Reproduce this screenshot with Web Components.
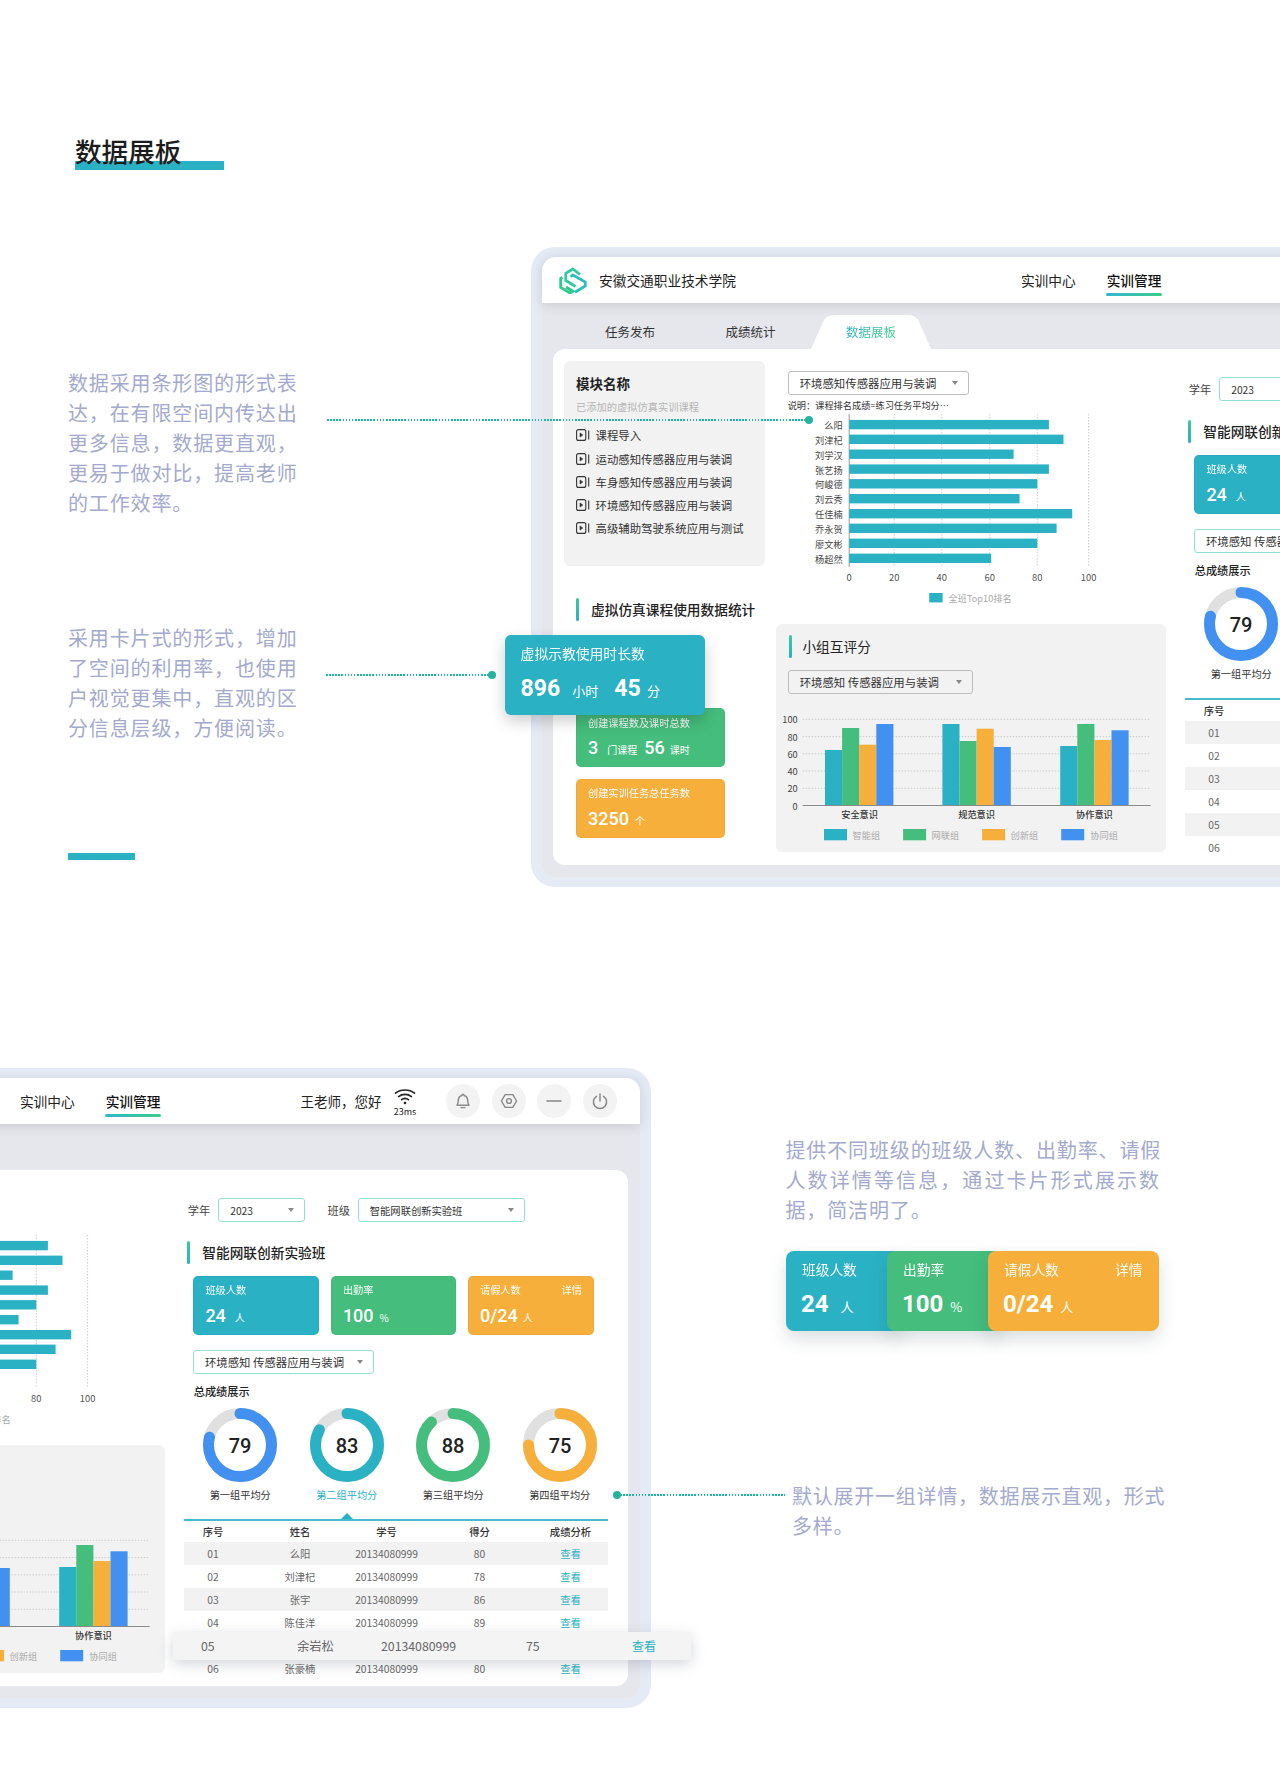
<!DOCTYPE html>
<html lang="zh-CN">
<head>
<meta charset="utf-8">
<title>数据展板</title>
<style>
html,body{margin:0;padding:0;background:#fff;overflow:hidden}
body{font-family:"Noto Sans CJK SC","Noto Sans",sans-serif;width:1280px;height:1787px}
</style>
</head>
<body>
<x-sheet></x-sheet>
<script>
const TEAL='#2bb1c4',GREEN='#45bd7c',ORANGE='#f6af3a',BLUE='#4291f1';
const CJK='"Noto Sans CJK SC","Noto Sans",sans-serif';
function def(name,css,html){
  customElements.define(name,class extends HTMLElement{
    constructor(){
      super();
      const r=this.attachShadow({mode:'open'});
      r.innerHTML='<style>'+css+'</style>'+(typeof html==='function'?html(this):html);
    }
  });
}
/* ---------- small pieces ---------- */
def('x-select',`
:host{display:block;box-sizing:border-box;height:24px;border:1px solid #bdbdbd;border-radius:3px;font-size:11.4px;color:#333}
:host([mint]){border:1.2px solid #8fe0d4;border-radius:3px;font-size:10.3px}
:host([big]){font-size:11.4px;color:#333}
.w{display:flex;align-items:center;justify-content:space-between;height:100%;padding:0 10px 0 11px;white-space:pre}
.c{width:0;height:0;border:3.2px solid transparent;border-top:4px solid #888;border-bottom:0}
`,`<div class="w"><span><slot></slot></span><i class="c"></i></div>`);

def('x-title',`
:host{display:flex;align-items:center;gap:12px;height:22.6px;font-size:13.7px;font-weight:500;color:#222;white-space:nowrap}
i{width:3px;height:100%;border-radius:2px;background:linear-gradient(#3cc99a,${TEAL});flex:none}
`,`<i></i><span><slot></slot></span>`);

def('x-stat',`
:host{display:block;box-sizing:border-box;position:relative;background:var(--bg);color:#fff;border-radius:var(--r,5px);
 padding:var(--top,6.7px) var(--pr,12px) 0 var(--pl,12px);width:var(--w);height:var(--h);flex:none;
 box-shadow:var(--sh,inset 0 0 0 1px rgba(0,0,0,.03));overflow:visible}
.l{display:flex;justify-content:space-between;font-size:var(--lab,10.2px);line-height:var(--labh,14px);white-space:nowrap;opacity:.97}
.n{display:flex;align-items:baseline;margin-top:var(--gap,8px);line-height:var(--numh,20px);white-space:nowrap;height:var(--numh,20px)}
::slotted(b){font:var(--nw,500) var(--num,18px)/var(--numh,20px) Roboto,sans-serif}
::slotted(i){font:400 var(--unit,10px)/var(--numh,20px) ${CJK};margin-left:var(--ug,9px)}
`,`<div class="l"><span><slot name="label"></slot></span><span><slot name="extra"></slot></span></div><div class="n"><slot></slot></div>`);

def('x-donut',`
:host{display:block;width:106.5px;flex:none;text-align:center}
svg{display:block;margin:0 auto}
text{font:500 20px Roboto,sans-serif;fill:#222;text-anchor:middle;dominant-baseline:central}
p{margin:6px 0 0;font-size:10.2px;line-height:14px;color:#333;white-space:nowrap}
:host([active]) p{color:${TEAL}}
`,el=>{
  const s=el.getAttribute('score'),c=el.getAttribute('color');
  return `<svg width="74" height="74" viewBox="0 0 74 74"><circle cx="37" cy="37" r="31.5" fill="none" stroke="#e0e0e0" stroke-width="11"/>
  <circle cx="37" cy="37" r="31.5" fill="none" stroke="${c}" stroke-width="11" stroke-linecap="round" pathLength="100" stroke-dasharray="${s} 100" transform="rotate(-90 37 37)"/>
  <text x="37" y="37.8">${s}</text></svg><p><slot></slot></p>`;
});

/* ---------- icons ---------- */
const ICON={
 logo:`<svg width="28" height="28" viewBox="0 0 28 28" fill="none" stroke-width="2.8" stroke-linejoin="miter">
 <path stroke="#30cba0" d="M21 8.5 13.8 3 6.8 7.2v7.3l9.7 6"/><path stroke="#31cb8c" d="M3.5 11.5 1.7 12.6v8.9L11 27l3-1.8-7-4.2"/><path stroke="#2bbdc2" d="M11.5 10.5 14 9l12.3 7v4L16 26.3"/></svg>`,
 bell:`<svg width="18" height="18" viewBox="0 0 18 18" fill="none" stroke="#888" stroke-width="1.4" stroke-linecap="round" stroke-linejoin="round"><path d="M9 2.2a1 1 0 0 1 1 1v.3c2.3.6 3.7 2.5 3.7 4.9 0 2.4.5 3.6 1.3 4.8H3c.8-1.2 1.3-2.4 1.3-4.8 0-2.4 1.4-4.3 3.7-4.9v-.3a1 1 0 0 1 1-1z"/><path d="M7 15.6h4"/></svg>`,
 hex:`<svg width="18" height="18" viewBox="0 0 18 18" fill="none" stroke="#888" stroke-width="1.4" stroke-linejoin="round"><path d="M5.2 2.6h7.6L16.6 9l-3.8 6.4H5.2L1.4 9z"/><circle cx="9" cy="9" r="2.4"/></svg>`,
 minus:`<svg width="18" height="18" viewBox="0 0 18 18" fill="none" stroke="#888" stroke-width="1.5" stroke-linecap="round"><path d="M2 9h14"/></svg>`,
 power:`<svg width="18" height="18" viewBox="0 0 18 18" fill="none" stroke="#888" stroke-width="1.5" stroke-linecap="round"><path d="M9 2v7"/><path d="M5.4 4.4a6.6 6.6 0 1 0 7.2 0"/></svg>`,
 wifi:`<svg width="22" height="17" viewBox="0 0 22 17" fill="none" stroke="#222" stroke-width="1.6" stroke-linecap="round"><path d="M1.5 5.2C6.6.9 15.4.9 20.5 5.2"/><path d="M4.6 8.6c3.6-3 9.2-3 12.8 0"/><path d="M7.6 11.7c2-1.6 4.8-1.6 6.8 0"/><circle cx="11" cy="15" r="1.3" fill="#222" stroke="none"/></svg>`,
 play:`<svg width="14" height="12" viewBox="0 0 14 12" fill="none" stroke="#333" stroke-width="1.1"><rect x=".6" y=".6" width="9.2" height="10.8" rx="2"/><path d="M4 3.9v4.2l2.8-2.1z" fill="#333" stroke-width=".6" stroke-linejoin="round"/><path d="M12.7 1.6v8.8"/></svg>`
};

/* ---------- header ---------- */
def('x-topbar',`
:host{display:flex;align-items:center;height:46px;background:#fff;border-radius:14px 14px 0 0;padding-left:17.5px;position:relative;z-index:1;box-shadow:0 2px 12px rgba(50,50,70,.16);color:#222;white-space:nowrap}
.logo{width:28px;height:28px;flex:none}
.name{margin-left:12px;font-size:13.7px;line-height:20px}
.nav{margin-left:285px;font-size:13.7px;position:relative;line-height:20px}
.nav+.nav{margin-left:31px}
.on{font-weight:500;color:#111}
.on::after{content:"";position:absolute;left:-1px;right:-1px;top:23.3px;height:3px;border-radius:2px;background:linear-gradient(90deg,#33b7cf,#3dcb8a)}
.who{margin-left:140px;font-size:13.5px}
.net{margin-left:12px;width:23px;display:flex;flex-direction:column;align-items:center;margin-top:4px}
.net span{font-size:9px;line-height:11px;margin-top:1px}
.btn{width:34px;height:34px;border-radius:50%;background:#f3f3f3;display:flex;align-items:center;justify-content:center;margin-left:11.5px;flex:none}
.btn.a{margin-left:29.8px}
svg{display:block}
`,`<div class="logo">${ICON.logo}</div><div class="name">安徽交通职业技术学院</div>
<div class="nav">实训中心</div><div class="nav on">实训管理</div><div class="who">王老师，您好</div>
<div class="net">${ICON.wifi}<span>23ms</span></div>
<div class="btn a">${ICON.bell}</div><div class="btn">${ICON.hex}</div><div class="btn">${ICON.minus}</div><div class="btn">${ICON.power}</div>`);

def('x-tabs',`
:host{display:flex;align-items:center;height:46.3px;padding-left:63.5px;font-size:12.5px;color:#333;white-space:nowrap;box-sizing:border-box;padding-top:13px}
span{margin-right:70.5px;position:relative;line-height:20px}
.on{position:relative;color:transparent}
.on em{font-style:normal;position:relative;background:linear-gradient(90deg,${TEAL},#41c98a);-webkit-background-clip:text;background-clip:text;color:transparent}
svg{position:absolute;left:-34.7px;top:-7.3px;display:block}
`,`<span>任务发布</span><span>成绩统计</span><span class="on"><svg width="120" height="34" viewBox="0 0 120 34"><path fill="#fff" d="M0 34L11 9C13 3 17 0 24 0H96C103 0 107 3 109 9L120 34Z"/></svg><em>数据展板</em></span>`);

/* ---------- left column ---------- */
def('x-modules',`
:host{display:block;box-sizing:border-box;height:205px;background:#f2f2f2;border-radius:6px;padding:13.3px 12px 0;white-space:nowrap}
h3{margin:0;font-size:13.5px;font-weight:700;line-height:18px;color:#222}
p{margin:7.7px 0 9.5px;font-size:10.25px;line-height:14px;color:#b4b4b4}
div{display:flex;align-items:center;gap:5.5px;height:23px;font-size:11.4px;color:#333}
div:nth-of-type(2){margin-top:1px}
svg{display:block;flex:none}
`,`<h3>模块名称</h3><p>已添加的虚拟仿真实训课程</p>`+
['课程导入','运动感知传感器应用与装调','车身感知传感器应用与装调','环境感知传感器应用与装调','高级辅助驾驶系统应用与测试'].map(t=>`<div>${ICON.play}<span>${t}</span></div>`).join(''));

def('x-usage',`
:host{display:block;position:relative;padding-left:12px;padding-top:32.3px}
.blue{position:absolute;left:-59px;top:69.3px;z-index:3}
.g{margin-top:87.4px}
.o{margin-top:12.3px}
`,`<x-title>虚拟仿真课程使用数据统计</x-title>
<x-stat class="blue" style="--bg:${TEAL};--w:199.5px;--h:79.7px;--pl:15.6px;--top:9px;--lab:13.8px;--labh:18px;--gap:13px;--numh:28px;--num:23px;--nw:700;--unit:13px;--ug:12px;--r:6px;--sh:0 6px 16px rgba(0,0,0,.2)"><span slot="label">虚拟示教使用时长数</span><b>896</b><i>小时</i><b style="margin-left:16px">45</b><i style="margin-left:6.5px">分</i></x-stat>
<x-stat class="g" style="--bg:${GREEN};--w:149px;--h:59px;--top:7.7px"><span slot="label">创建课程数及课时总数</span><b>3</b><i>门课程</i><b style="margin-left:7px">56</b><i style="margin-left:5px">课时</i></x-stat>
<x-stat class="o" style="--bg:${ORANGE};--w:149px;--h:58.7px;--top:6.7px;--gap:9px"><span slot="label">创建实训任务总任务数</span><b>3250</b><i style="margin-left:6px">个</i></x-stat>`);

/* ---------- bar chart ---------- */
def('x-barchart',`
:host{display:block;width:390px;height:198px}
svg{display:block;overflow:visible}
text{font-family:${CJK};font-size:9.2px;fill:#444;dominant-baseline:central}
.a{font-size:9.4px;fill:#555;text-anchor:middle}
.n{text-anchor:end}
.l{fill:#aaa;font-size:9.2px}
`,()=>{
  const ox=776.4,oy=413,X=x=>(x-ox).toFixed(1),Y=y=>(y-oy).toFixed(1);
  const names=['么阳','刘津杞','刘学汉','张艺扬','何峻德','刘云秀','任佳楠','乔永贺','廖文彬','杨超然'];
  const ends=[1049.3,1063.9,1014,1049.3,1037.7,1020,1072.6,1057,1037.7,991.6];
  const cy=[425.6,440.3,455.2,470.1,484.8,499.7,514.7,529.3,544.3,559.3];
  const ticks=[[0,849.6],[20,894.7],[40,942.2],[60,990.2],[80,1037.7],[100,1089]];
  let s='<svg width="390" height="198" viewBox="0 0 390 198">';
  ticks.forEach(([t,x],i)=>{
    s+=`<line x1="${X(x)}" x2="${X(x)}" y1="${Y(415)}" y2="${Y(568)}" stroke="${i?'#cfcfcf':'#999'}" ${i?'stroke-dasharray="1.5 1.5"':''}/>`;
    s+=`<text class="a" x="${X(x)}" y="${Y(578.3)}">${t}</text>`;
  });
  names.forEach((n,i)=>{
    s+=`<rect x="${X(849.6)}" y="${Y(cy[i]-4.7)}" width="${(ends[i]-849.6).toFixed(1)}" height="9.4" fill="${TEAL}"/>`;
    s+=`<text class="n" x="${X(843)}" y="${Y(cy[i]+.5)}">${n}</text>`;
  });
  s+=`<rect x="${X(929.6)}" y="${Y(594)}" width="13.4" height="9.4" fill="${TEAL}"/><text class="l" x="${X(949)}" y="${Y(598.7)}">全班Top10排名</text></svg>`;
  return s;
});

def('x-groupchart',`
:host{display:block;width:390px;height:150px}
svg{display:block}
text{font-family:${CJK};font-size:9.2px;dominant-baseline:central;fill:#333}
.y{text-anchor:end;fill:#444}
.c{text-anchor:middle;font-weight:500}
.l{fill:#aaa}
`,()=>{
  const ox=776.4,oy=700,X=x=>(x-ox).toFixed(1),Y=y=>(y-oy).toFixed(1);
  const cols=[TEAL,GREEN,ORANGE,BLUE];
  let s='<svg width="390" height="150" viewBox="0 0 390 150">';
  [[100,720.3],[80,737.6],[60,754.8],[40,772],[20,789.3],[0,806.5]].forEach(([t,y],i)=>{
    s+=`<text class="y" x="${X(798)}" y="${Y(y)}">${t}</text>`;
    s+=`<line x1="${X(803)}" x2="${X(1151)}" y1="${Y(y)}" y2="${Y(y)}" stroke="${t?'#ccc':'#8a8a8a'}" ${t?'stroke-dasharray="1.5 1.5"':'stroke-width="1.2"'}/>`;
  });
  [[825.4,[751,729,745.7,725],'安全意识',860],[942.8,[725,742,729.7,748],'规范意识',977],[1060.6,[747,725,741,731.3],'协作意识',1094.8]].forEach(([x0,tops,lab,cx])=>{
    tops.forEach((t,i)=>{s+=`<rect x="${X(x0+i*17.1)}" y="${Y(t)}" width="17.1" height="${(806-t).toFixed(1)}" fill="${cols[i]}"/>`;});
    s+=`<text class="c" x="${X(cx)}" y="${Y(815.3)}">${lab}</text>`;
  });
  [[824.4,853,'智能组'],[903.5,932,'网联组'],[982.5,1011,'创新组'],[1061.6,1090.7,'协同组']].forEach(([rx,tx,t],i)=>{
    s+=`<rect x="${X(rx)}" y="${Y(830)}" width="23" height="11.3" fill="${cols[i]}"/><text class="l" x="${X(tx)}" y="${Y(835.7)}">${t}</text>`;
  });
  return s+'</svg>';
});

def('x-mid',`
:host{display:block;padding-top:22.3px;width:390px}
x-select{width:181px;margin-left:11.3px;background:#fff}
.note{margin:4px 0 0 11.3px;height:13px;font-size:9.2px;line-height:13px;color:#333;white-space:nowrap}
.box{margin-top:14px;box-sizing:border-box;height:227.7px;background:#f2f2f2;border-radius:6px;padding-top:10.7px}
x-title{margin-left:12.3px;gap:10.7px;font-weight:400;color:#222}
.box x-select{width:185px;margin:12px 0 5.7px 11.3px;background:transparent}
`,`<x-select>环境感知传感器应用与装调</x-select><div class="note">说明：课程排名成绩=练习任务平均分…</div><x-barchart></x-barchart>
<div class="box"><x-title>小组互评分</x-title><x-select>环境感知 传感器应用与装调</x-select><x-groupchart></x-groupchart></div>`);

/* ---------- right column ---------- */
def('x-scores',`
:host{display:block;position:relative;width:424px;--cols:57.2px 116.8px 56.4px 129.4px 52.6px 11.6px}
.line{border-top:2px solid #45bccb;position:relative}
.line::before{content:"";position:absolute;left:156.6px;top:-8px;border:6px solid transparent;border-top:0;border-bottom:6px solid ${TEAL}}
.r{display:grid;grid-template-columns:var(--cols);height:23px;font-size:10.3px;color:#666;align-items:center;position:relative}
.h{height:21.6px;color:#333;font-weight:500}
.r>span{display:flex;justify-content:center;white-space:nowrap}
.z{background:#f2f2f2}
a{color:${TEAL}}
.f{position:absolute;left:-11.6px;top:-2.5px;width:518.3px;height:28px;background:#f4f4f4;box-shadow:0 4px 14px rgba(60,70,90,.22);display:flex;align-items:center;font-size:12.3px;color:#666;white-space:nowrap;z-index:4}
.f span{position:absolute}
`,el=>{
  const rows=[['01','么阳','80'],['02','刘津杞','78'],['03','张宇','86'],['04','陈佳洋','89'],['05','余岩松','75'],['06','张豪楠','80']];
  const fl=el.hasAttribute('float-row');
  let s=`<div class="line"></div><div class="r h"><span>序号</span><span>姓名</span><span>学号</span><span>得分</span><span>成绩分析</span></div>`;
  rows.forEach((r,i)=>{
    if(fl&&i==4){
      s+=`<div class="r"><div class="f"><span style="left:28.2px">05</span><span style="left:124.2px">余岩松</span><span style="left:208.2px">20134080999</span><span style="left:353.2px">75</span><span style="left:459.2px;color:${TEAL};font-size:12px">查看</span></div></div>`;
    } else {
      s+=`<div class="r ${i%2==0?'z':''}"><span>${r[0]}</span><span>${r[1]}</span><span>20134080999</span><span>${r[2]}</span><span><a>查看</a></span></div>`;
    }
  });
  return s;
});

def('x-right',`
:host{display:block;padding-top:28.3px;width:424px}
.fl{display:flex;align-items:center;margin-left:3.4px;height:23.7px;font-size:11.2px;color:#444;white-space:nowrap}
.fl x-select{height:23.7px;font-size:10.3px;color:#333}
.ti{margin:19px 0 0 2.9px}
.cards{display:flex;gap:12px;margin:12.6px 0 0 9px;--gap:9px}
.sel{width:181px;height:23.4px;margin:15.3px 0 0 8.5px}
.sub{margin:9.3px 0 0 9.3px;font-size:11.2px;line-height:16px;font-weight:500;color:#222;white-space:nowrap}
.dn{display:flex;margin:9.3px 0 0 2.6px}
x-scores{margin-top:16.4px}
`,el=>`<div class="fl"><span>学年</span><x-select mint style="width:86.4px;margin-left:8px">2023</x-select><span style="margin-left:23px">班级</span><x-select mint style="width:167px;margin-left:7.8px">智能网联创新实验班</x-select></div>
<x-title class="ti">智能网联创新实验班</x-title>
<div class="cards">
<x-stat style="--bg:${TEAL};--w:125.5px;--h:58.7px"><span slot="label">班级人数</span><b>24</b><i style="margin-left:9px">人</i></x-stat>
<x-stat style="--bg:${GREEN};--w:125.5px;--h:58.7px"><span slot="label">出勤率</span><b>100</b><i style="margin-left:6px">%</i></x-stat>
<x-stat style="--bg:${ORANGE};--w:125.5px;--h:58.7px;--pl:11.6px"><span slot="label">请假人数</span><span slot="extra">详情</span><b>0/24</b><i style="margin-left:5px">人</i></x-stat>
</div>
<x-select mint big class="sel">环境感知 传感器应用与装调</x-select>
<div class="sub">总成绩展示</div>
<div class="dn"><x-donut score="79" color="${BLUE}">第一组平均分</x-donut><x-donut score="83" color="${TEAL}" active>第二组平均分</x-donut><x-donut score="88" color="${GREEN}">第三组平均分</x-donut><x-donut score="75" color="${ORANGE}">第四组平均分</x-donut></div>
<x-scores ${el.hasAttribute('float-row')?'float-row':''}></x-scores>`);

/* ---------- window ---------- */
def('x-mock',`
:host{display:block;flex:none;width:1120.5px;height:640px;box-sizing:border-box;background:#e4ebf5;border-radius:24px;padding:10px 11px 10px 10.5px}
.in{height:620px;background:#e6e7ec;border-radius:14px}
.c{width:1076px;height:515.7px;margin-left:11.5px;background:#fff;border-radius:12px;display:flex;padding-left:11px;box-sizing:border-box;position:relative}
.a{width:201px;flex:none}
x-mid{margin-left:11.4px;flex:none}
x-right{margin-left:19px;flex:none}
`,el=>`<div class="in"><x-topbar></x-topbar><x-tabs></x-tabs><div class="c"><div class="a"><x-modules style="margin-top:11.7px"></x-modules><x-usage></x-usage></div><x-mid></x-mid><x-right ${el.hasAttribute('float-row')?'float-row':''}></x-right></div></div>`);

/* ---------- page copy ---------- */
def('x-copy',`
:host{display:block;font-size:20px;font-weight:400;line-height:30px;letter-spacing:var(--ls,.87px);color:#a3aacd;white-space:pre-line}
`,`<slot></slot>`);

def('x-leader',`
:host{position:absolute;display:block;height:8px;left:var(--x);top:var(--y);width:var(--w);z-index:5}
.l{position:absolute;left:0;right:0;top:3.2px;height:1.6px;background:repeating-linear-gradient(90deg,#1fb5a3 0 1.6px,transparent 1.6px 3.1px)}
.d{position:absolute;top:0;width:8px;height:8px;border-radius:50%;background:#27b39c}
:host([left]) .d{left:-4px}
:host(:not([left])) .d{right:-4px}
`,`<div class="l"></div><div class="d"></div>`);

def('x-sheet',`
:host{display:block;position:relative;width:1280px;height:1787px;overflow:hidden;background:#fff}
.s1{display:flex;height:900px}
.left{width:531px;flex:none;box-sizing:border-box;padding-left:68px}
.m1{margin-top:246.7px}
h1{margin:134px 0 0 7px;width:149px;height:36.7px;font-size:26.6px;line-height:34px;font-weight:500;color:#1c1c1c;white-space:nowrap;
 background:linear-gradient(${TEAL},${TEAL}) left bottom/100% 9.4px no-repeat}
.p1{margin-top:197.3px}
.p2{margin-top:105.4px}
.tick{width:66.5px;height:7px;background:${TEAL};margin-top:110px}
.s2{display:flex;height:887px}
.m2{margin:167.7px 0 0 -470px}
.right{margin:235px 0 0 135px;width:400px;flex:none}
.combo{display:flex;margin-top:26px}
.combo x-stat+x-stat{margin-left:-14px}
.combo{--pl:16.5px;--top:9px;--lab:13.7px;--labh:18px;--gap:12px;--numh:28px;--num:24px;--nw:700;--unit:13px;--r:8px;--sh:0 8px 18px rgba(30,60,70,.16);--w:115px;--h:79.7px}
.combo b{margin-left:-1px}
.p4{margin:150px 0 0 6.5px;--ls:.74px}
`,`<section class="s1"><div class="left"><h1>数据展板</h1>
<x-copy class="p1">数据采用条形图的形式表
达，在有限空间内传达出
更多信息，数据更直观，
更易于做对比，提高老师
的工作效率。</x-copy>
<x-copy class="p2">采用卡片式的形式，增加
了空间的利用率，也使用
户视觉更集中，直观的区
分信息层级，方便阅读。</x-copy>
<div class="tick"></div></div><x-mock class="m1"></x-mock></section>
<section class="s2"><x-mock class="m2" float-row></x-mock><div class="right">
<x-copy>提供不同班级的班级人数、出勤率、请假
<span style="letter-spacing:2.1px">人数详情等信息，通过卡片形式展示数</span>
据，简洁明了。</x-copy>
<div class="combo">
<x-stat style="--bg:${TEAL};--ug:12px"><span slot="label">班级人数</span><b>24</b><i>人</i></x-stat>
<x-stat style="--bg:${GREEN};--ug:7px"><span slot="label">出勤率</span><b>100</b><i>%</i></x-stat>
<x-stat style="--bg:${ORANGE};--w:171px;--pr:16px;--ug:7px"><span slot="label">请假人数</span><span slot="extra">详情</span><b>0/24</b><i>人</i></x-stat>
</div>
<x-copy class="p4">默认展开一组详情，数据展示直观，形式
多样。</x-copy>
</div></section>
<x-leader style="--x:327px;--y:416px;--w:481.5px"></x-leader>
<x-leader style="--x:326px;--y:671px;--w:166px"></x-leader>
<x-leader left style="--x:617px;--y:1491px;--w:168px"></x-leader>`);
</script>
</body>
</html>
